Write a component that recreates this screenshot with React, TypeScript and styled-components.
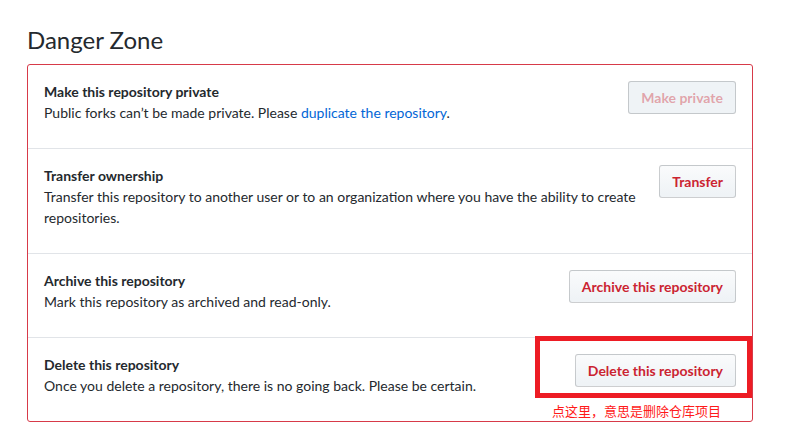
import React from "react";
import styled, { createGlobalStyle } from "styled-components";

const Global = createGlobalStyle`
  html, body { margin: 0; padding: 0; background: #fff; }
  body {
    font-family: "Lato", "Noto Sans", "Liberation Sans", sans-serif;
    font-size: 14px;
    line-height: 1.5;
    color: #24292e;
  }
`;

const Page = styled.div`
  padding: 24px 0 0 27px;
  width: 726px;
`;

const Heading = styled.h2`
  margin: 0 0 8px;
  font-size: 24px;
  font-weight: 400;
  line-height: 32px;
  color: #24292e;
`;

const DangerBox = styled.div`
  border: 1px solid #d73a49;
  border-radius: 3px;
  display: flex;
  flex-direction: column;
`;

const Row = styled.div<{ first?: boolean }>`
  position: relative;
  display: flex;
  align-items: flex-start;
  gap: 16px;
  padding: 16px;
  border-top: ${(p) => (p.first ? "none" : "1px solid #e1e4e8")};
`;

const Info = styled.div`
  flex: 1;
  min-width: 0;
`;

const Title = styled.strong`
  display: block;
  font-weight: 700;
  line-height: 21px;
`;

const Desc = styled.p`
  margin: 0 0 9px;
  line-height: 21px;
`;

const Link = styled.a`
  color: #0366d6;
  text-decoration: none;
`;

const DangerButton = styled.button<{ disabled?: boolean }>`
  flex: none;
  font-family: inherit;
  font-size: 14px;
  font-weight: 700;
  line-height: 19px;
  padding: 6px 12px;
  border: 1px solid rgba(27, 31, 35, 0.2);
  border-radius: 3px;
  background: ${(p) =>
    p.disabled ? "#eff3f6" : "linear-gradient(-180deg, #fafbfc 0%, #eff3f6 90%)"};
  color: ${(p) => (p.disabled ? "rgba(203, 36, 49, 0.4)" : "#cb2431")};
  cursor: pointer;
`;

const Annotation = styled.div`
  position: absolute;
  right: 0;
  top: -2px;
  width: 217px;
  height: 62px;
  box-sizing: border-box;
  border: 5px solid #ed1c24;
  pointer-events: none;
`;

const AnnotationText = styled.span`
  position: absolute;
  left: 524px;
  top: 65px;
  font-family: "Noto Sans CJK SC", sans-serif;
  font-size: 13px;
  line-height: 16px;
  color: #ff1a1a;
  white-space: nowrap;
`;

export default function App() {
  return (
    <>
      <Global />
      <Page>
        <Heading>Danger Zone</Heading>
        <DangerBox>
          <Row first>
            <Info>
              <Title>Make this repository private</Title>
              <Desc>
                Public forks can’t be made private. Please{" "}
                <Link href="#">duplicate the repository</Link>.
              </Desc>
            </Info>
            <DangerButton disabled>Make private</DangerButton>
          </Row>
          <Row>
            <Info>
              <Title>Transfer ownership</Title>
              <Desc>
                Transfer this repository to another user or to an organization where you have the
                ability to create repositories.
              </Desc>
            </Info>
            <DangerButton>Transfer</DangerButton>
          </Row>
          <Row>
            <Info>
              <Title>Archive this repository</Title>
              <Desc>Mark this repository as archived and read-only.</Desc>
            </Info>
            <DangerButton>Archive this repository</DangerButton>
          </Row>
          <Row>
            <Info>
              <Title>Delete this repository</Title>
              <Desc>Once you delete a repository, there is no going back. Please be certain.</Desc>
            </Info>
            <DangerButton>Delete this repository</DangerButton>
            <Annotation />
            <AnnotationText>点这里，意思是删除仓库项目</AnnotationText>
          </Row>
        </DangerBox>
      </Page>
    </>
  );
}
